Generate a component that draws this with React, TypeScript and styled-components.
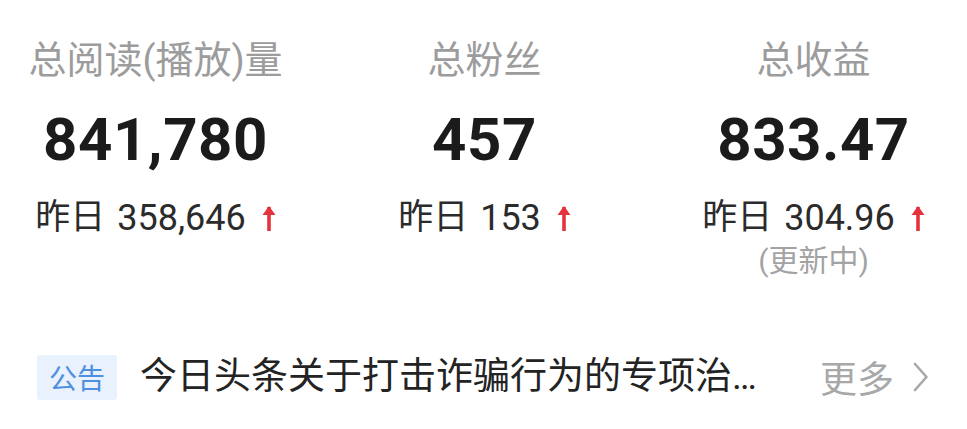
import styled, { createGlobalStyle } from "styled-components";

const GlobalStyle = createGlobalStyle`
    html, body {
        margin: 0;
        padding: 0;
        background: #ffffff;
    }
    body {
        font-family: Roboto, "Noto Sans CJK SC", sans-serif;
        width: 967px;
        height: 429px;
        overflow: hidden;
    }
`;

const Page = styled.div`
    width: 967px;
    height: 429px;
    padding-top: 38px;
    box-sizing: border-box;
`;

const Stats = styled.div`
    display: grid;
    grid-template-columns: repeat(3, 329px);
    margin-left: -9px;
`;

const Stat = styled.div`
    display: flex;
    flex-direction: column;
    align-items: center;
`;

const Label = styled.div`
    font-size: 38px;
    line-height: 44px;
    color: #9c9c9c;
    white-space: nowrap;
`;

const Value = styled.div`
    margin-top: 23px;
    font-size: 60px;
    line-height: 70px;
    font-weight: 700;
    color: #1b1b1b;
    letter-spacing: 0.5px;
`;

const Yesterday = styled.div`
    margin-top: 22px;
    display: flex;
    align-items: center;
    font-size: 35px;
    line-height: 42px;
    color: #2b2b2b;
    white-space: nowrap;
`;

const YesterdayValue = styled.span`
    margin-left: 12px;
    font-size: 36px;
`;

const UpArrow = styled.svg`
    width: 14px;
    height: 28px;
    margin-left: 16px;
    flex: none;
`;

const Updating = styled.div`
    margin-top: 5px;
    font-size: 30px;
    line-height: 34px;
    color: #a3a3a3;
`;

const Notice = styled.div`
    display: flex;
    align-items: center;
    margin-top: 72px;
    padding: 0 38px 0 37px;
`;

const Badge = styled.span`
    flex: none;
    height: 45px;
    padding: 0 12px;
    display: flex;
    align-items: center;
    background: #e9f1fc;
    color: #4d8fe0;
    font-size: 28px;
    border-radius: 3px;
`;

const NoticeText = styled.div`
    flex: 1;
    min-width: 0;
    margin-left: 23px;
    margin-right: 36px;
    font-size: 37px;
    line-height: 46px;
    color: #232323;
    white-space: nowrap;
    overflow: hidden;
    text-overflow: ellipsis;
`;

const More = styled.span`
    flex: none;
    display: flex;
    align-items: center;
    font-size: 37px;
    color: #a8a8a8;
`;

const Chevron = styled.svg`
    width: 16px;
    height: 30px;
    margin-left: 19px;
`;

function Arrow() {
    return (
        <UpArrow viewBox="0 0 14 28">
            <path d="M7 3 L7 27" stroke="#e5323c" strokeWidth="3.6" />
            <path d="M0.5 11 L7 2 L13.5 11 Z" fill="#e5323c" />
        </UpArrow>
    );
}

const stats = [
    { label: "总阅读(播放)量", value: "841,780", yesterday: "358,646" },
    { label: "总粉丝", value: "457", yesterday: "153" },
    { label: "总收益", value: "833.47", yesterday: "304.96", note: "(更新中)" },
];

export default function App() {
    return (
        <Page>
            <GlobalStyle />
            <Stats>
                {stats.map((s) => (
                    <Stat key={s.label}>
                        <Label>{s.label}</Label>
                        <Value>{s.value}</Value>
                        <Yesterday>
                            昨日
                            <YesterdayValue>{s.yesterday}</YesterdayValue>
                            <Arrow />
                        </Yesterday>
                        {s.note && <Updating>{s.note}</Updating>}
                    </Stat>
                ))}
            </Stats>
            <Notice>
                <Badge>公告</Badge>
                <NoticeText>今日头条关于打击诈骗行为的专项治理公告</NoticeText>
                <More>
                    更多
                    <Chevron viewBox="0 0 16 30">
                        <path d="M2 2 L13.5 15 L2 28" fill="none" stroke="#a8a8a8" strokeWidth="2.6" strokeLinecap="round" strokeLinejoin="round" />
                    </Chevron>
                </More>
            </Notice>
        </Page>
    );
}
